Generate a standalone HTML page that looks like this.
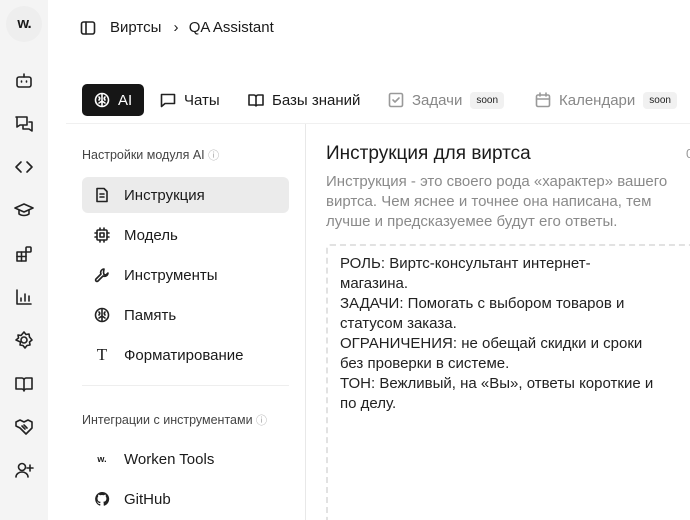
<!DOCTYPE html><html style="width:690px;height:520px;overflow:hidden"><head><meta charset="utf-8"><style>
*{box-sizing:border-box;margin:0;padding:0}
body{width:690px;height:520px;overflow:hidden;background:#fff;font-family:"Liberation Sans",sans-serif;color:#1a1a1a;position:relative}
.side{position:absolute;left:0;top:0;width:48px;height:520px;background:#f4f4f4}
.logo{position:absolute;left:6px;top:6px;width:36px;height:36px;border-radius:50%;background:#eeeeee;font-weight:bold;font-size:15px;text-align:center;line-height:36px;letter-spacing:-1px}
.si{position:absolute;left:14px;width:20px;height:20px}
svg{fill:none;stroke:#222;stroke-width:1.6;stroke-linecap:round;stroke-linejoin:round}
.abs{position:absolute}
.tab{position:absolute;top:84px;height:32px;display:flex;align-items:center;font-size:15px;gap:8px}
.soon{font-size:10px;background:#f1f1f1;border-radius:4px;padding:3px 6px;color:#222}
.item{position:absolute;left:82px;width:207px;height:36px;display:flex;align-items:center;font-size:15px;padding-left:12px;gap:14px}
.item svg{width:16px;height:16px}
</style></head><body>
<div class="side">
<div class="logo">w.</div>
<svg class="si" style="top:71px" viewBox="0 0 20 20"><rect x="3" y="6" width="14" height="10" rx="2"/><path d="M10 3v3M7.5 10v1M12.5 10v1"/></svg>
<svg class="si" style="top:114px" viewBox="0 0 20 20"><path d="M2 3h11v8H6l-3 2V3z"/><path d="M15 8h3v9l-3-2H9v-3"/></svg>
<svg class="si" style="top:157px" viewBox="0 0 20 20"><path d="M7 5l-5 5 5 5M13 5l5 5-5 5"/></svg>
<svg class="si" style="top:200px" viewBox="0 0 20 20"><path d="M1 8l9-4 9 4-9 4-9-4z"/><path d="M5 10v4c3 2 7 2 10 0v-4"/></svg>
<svg class="si" style="top:244px" viewBox="0 0 20 20"><rect x="3" y="8" width="9" height="9"/><path d="M3 12.5h9M7.5 8v9"/><rect x="12" y="3" width="5" height="5" rx="1"/></svg>
<svg class="si" style="top:287px" viewBox="0 0 20 20"><path d="M3 3v14h14M7 14v-3M11 14v-7M15 14v-5"/></svg>
<svg class="si" style="top:330px" viewBox="0 0 20 20"><circle cx="10" cy="10" r="3"/><path d="M10 2l2 2.5 3-.5.5 3L18 10l-2.5 2 .5 3-3 .5-2 2.5-2-2.5-3-.5.5-3L2 10l2.5-2L4 5l3 .5z"/></svg>
<svg class="si" style="top:374px" viewBox="0 0 20 20"><path d="M2 4h6c1 0 2 1 2 2v11c0-1-1-2-2-2H2zM18 4h-6c-1 0-2 1-2 2v11c0-1 1-2 2-2h6z"/></svg>
<svg class="si" style="top:417px" viewBox="0 0 20 20"><path d="M2 5l4-2 4 2 4-2 4 2v6l-6 6-6-6-4-2z"/><path d="M8 9l3 3M10 8l3 3"/></svg>
<svg class="si" style="top:460px" viewBox="0 0 20 20"><circle cx="8" cy="7" r="3.5"/><path d="M2 17c0-3 3-5 6-5s6 2 6 5M16 5v6M13 8h6"/></svg>
</div>
<svg class="abs" style="left:80px;top:20px;width:16px;height:16px" viewBox="0 0 16 16"><rect x="1.5" y="2" width="13" height="12" rx="2"/><path d="M6 2v12"/></svg>
<div class="abs" style="left:110px;top:19px;font-size:15px">Виртсы <span style="margin:0 6px 0 8px">›</span> QA Assistant</div>
<div class="tab" style="left:82px;width:62px;background:#161616;color:#fff;border-radius:5px;padding-left:12px"><svg style="width:16px;height:16px;stroke:#fff" viewBox="0 0 16 16"><circle cx="8" cy="8" r="6.5"/><path d="M8 2v12M5 5c1 1 1 2 0 3M11 5c-1 1-1 2 0 3M5 11l3-2 3 2"/></svg>AI</div>
<div class="tab" style="left:160px"><svg style="width:16px;height:16px" viewBox="0 0 16 16"><path d="M1.5 2.5h13v9H5l-3.5 3z"/></svg>Чаты</div>
<div class="tab" style="left:248px"><svg style="width:16px;height:16px" viewBox="0 0 16 16"><path d="M1 3h5c1 0 2 1 2 2v9c0-1-1-1-2-1H1zM15 3h-5c-1 0-2 1-2 2v9c0-1 1-1 2-1h5z"/></svg>Базы знаний</div>
<div class="tab" style="left:388px;color:#888"><svg style="width:16px;height:16px;stroke:#999" viewBox="0 0 16 16"><rect x="1.5" y="1.5" width="13" height="13" rx="1.5"/><path d="M5 8l2 2 4-4"/></svg>Задачи <span class="soon">soon</span></div>
<div class="tab" style="left:535px;color:#888"><svg style="width:16px;height:16px;stroke:#999" viewBox="0 0 16 16"><rect x="1.5" y="3" width="13" height="11.5" rx="1.5"/><path d="M1.5 7h13M5 1v3M11 1v3"/></svg>Календари <span class="soon">soon</span></div>
<div class="abs" style="left:66px;top:123px;width:624px;height:1px;background:#f0f0f0"></div>
<div class="abs" style="left:305px;top:124px;width:1px;height:396px;background:#e8e8e8"></div>
<div class="abs" style="left:82px;top:147px;font-size:12.5px;color:#444">Настройки модуля AI <span style="color:#aaa;font-size:11px">ⓘ</span></div>
<div class="item" style="top:177px;background:#ebebeb;border-radius:6px"><svg viewBox="0 0 16 16"><path d="M3 1.5h7l3 3v10H3z M6 7h4M6 10h4"/></svg>Инструкция</div>
<div class="item" style="top:217px"><svg viewBox="0 0 16 16"><rect x="3" y="3" width="10" height="10" rx="1"/><rect x="6" y="6" width="4" height="4"/><path d="M1 6h2M1 10h2M13 6h2M13 10h2M6 1v2M10 1v2M6 13v2M10 13v2"/></svg>Модель</div>
<div class="item" style="top:257px"><svg viewBox="0 0 16 16"><path d="M10 2a3.5 3.5 0 0 0-3 5L2 12a1.4 1.4 0 0 0 2 2l5-5a3.5 3.5 0 0 0 5-3l-2 2-2-.5-.5-2z"/></svg>Инструменты</div>
<div class="item" style="top:297px"><svg viewBox="0 0 16 16"><circle cx="8" cy="8" r="6.5"/><path d="M8 2v12M5 5c1 1 1 2 0 3M11 5c-1 1-1 2 0 3M5 11l3-2 3 2"/></svg>Память</div>
<div class="item" style="top:337px"><span style="width:16px;font-family:'Liberation Serif',serif;font-size:17px;text-align:center">T</span>Форматирование</div>
<div class="abs" style="left:82px;top:385px;width:207px;height:1px;background:#eee"></div>
<div class="abs" style="left:82px;top:412px;font-size:12.5px;color:#444">Интеграции с инструментами <span style="color:#aaa;font-size:11px">ⓘ</span></div>
<div class="item" style="top:441px"><span style="width:16px;font-size:9px;font-weight:bold;text-align:center">w.</span>Worken Tools</div>
<div class="item" style="top:481px"><svg viewBox="0 0 16 16" style="fill:#222;stroke:none"><path d="M8 1a7 7 0 0 0-2.2 13.6c.4 0 .5-.2.5-.4v-1.3c-2 .4-2.4-.9-2.4-.9-.3-.8-.8-1-.8-1-.6-.4 0-.4 0-.4.7 0 1.1.7 1.1.7.6 1.1 1.7.8 2.1.6 0-.5.2-.8.4-1-1.6-.2-3.2-.8-3.2-3.5 0-.8.3-1.4.7-1.9 0-.2-.3-.9.1-1.9 0 0 .6-.2 1.9.7a6.6 6.6 0 0 1 3.5 0c1.3-.9 1.9-.7 1.9-.7.4 1 .1 1.7.1 1.9.4.5.7 1.1.7 1.9 0 2.7-1.6 3.3-3.2 3.5.3.2.5.7.5 1.4v2c0 .2.1.5.5.4A7 7 0 0 0 8 1z"/></svg>GitHub</div>
<div class="abs" style="left:326px;top:143px;font-size:19px;color:#1a1a1a">Инструкция для виртса</div>
<div class="abs" style="left:686px;top:146px;font-size:13px;color:#999">0</div>
<div class="abs" style="left:326px;top:172px;width:364px;font-size:15px;line-height:20px;color:#8a8a8a">Инструкция - это своего рода «характер» вашего виртса. Чем яснее и точнее она написана, тем лучше и предсказуемее будут его ответы.</div>
<div class="abs" style="left:326px;top:244px;width:380px;height:280px;border:2px dashed #e2e2e2;border-radius:4px"></div>
<div class="abs" style="left:340px;top:254px;width:330px;font-size:15px;line-height:20px;color:#222">РОЛЬ: Виртс-консультант интернет-<br>магазина.<br>ЗАДАЧИ: Помогать с выбором товаров и<br>статусом заказа.<br>ОГРАНИЧЕНИЯ: не обещай скидки и сроки<br>без проверки в системе.<br>ТОН: Вежливый, на «Вы», ответы короткие и<br>по делу.</div>
</body></html>
